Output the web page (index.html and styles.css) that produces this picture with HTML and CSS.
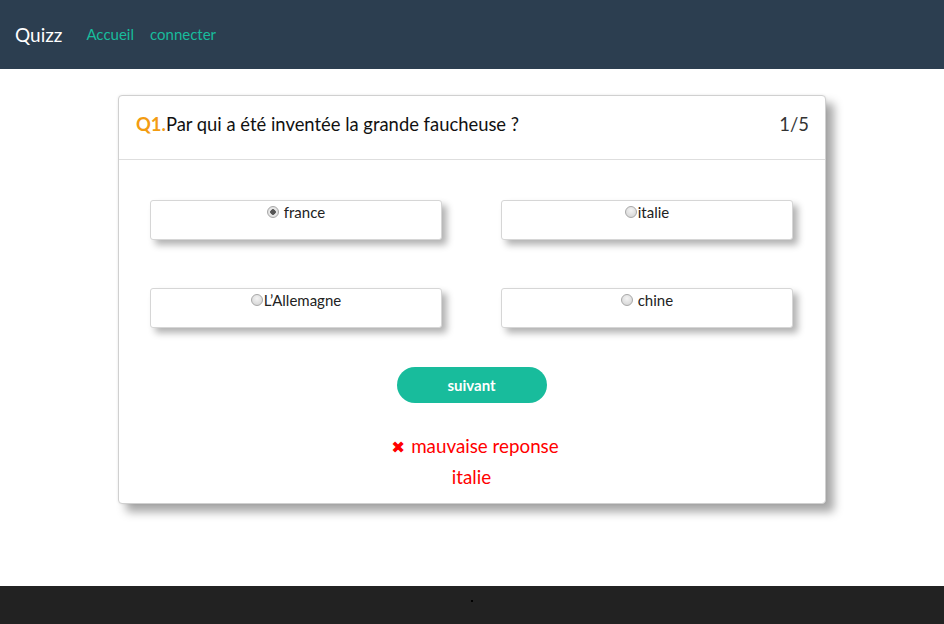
FILE: index.html
```html
<!DOCTYPE html>
<html lang="fr">
<head>
<meta charset="utf-8">
<title>Quizz</title>
<link rel="stylesheet" href="styles.css">
</head>
<body>
<nav class="navbar">
  <a class="brand" href="#">Quizz</a>
  <a class="nav-link" href="#">Accueil</a>
  <a class="nav-link" href="#">connecter</a>
</nav>
<main class="main">
  <section class="card">
    <header class="card-header">
      <h2 class="question"><span class="qnum">Q1.</span>Par qui a été inventée la grande faucheuse ?</h2>
      <span class="progress">1/5</span>
    </header>
    <div class="card-body">
      <div class="options">
        <label class="option"><input type="radio" name="r" class="radio" checked> france</label>
        <label class="option"><input type="radio" name="r" class="radio">italie</label>
        <label class="option"><input type="radio" name="r" class="radio">L’Allemagne</label>
        <label class="option"><input type="radio" name="r" class="radio"> chine</label>
      </div>
      <div class="actions">
        <button class="btn">suivant</button>
      </div>
      <div class="result">
        <p class="result-line result-main"><span class="cross">✖</span>mauvaise reponse</p>
        <p class="result-line">italie</p>
      </div>
    </div>
  </section>
</main>
<footer class="footer"><span class="dot"></span></footer>
</body>
</html>
```
FILE: styles.css
```css
* { box-sizing: border-box; }
html, body { margin: 0; padding: 0; }
body {
  font-family: Lato, "Open Sans", "Liberation Sans", sans-serif;
  font-size: 15px;
  color: #2c3e50;
  background: #fff;
  height: 624px;
  display: flex;
  flex-direction: column;
}
.navbar {
  height: 69px;
  flex: none;
  background: #2c3e50;
  display: flex;
  align-items: center;
  padding: 0 0 0 15px;
}
.brand {
  color: #fff;
  font-size: 19px;
  text-decoration: none;
  margin-right: 24px;
  line-height: 1;
}
.nav-link {
  color: #18bc9c;
  font-size: 15px;
  text-decoration: none;
  margin-right: 16px;
  line-height: 1;
}
.main {
  flex: 1;
  padding-top: 26px;
}
.card {
  width: 708px;
  height: 409px;
  margin: 0 auto;
  border: 1px solid #d0d0d0;
  border-radius: 4px;
  background: #fff;
  box-shadow: 8px 8px 10px rgba(0,0,0,0.35), 0 0 3px rgba(0,0,0,0.08);
}
.card-header {
  height: 64px;
  border-bottom: 1px solid #dedede;
  display: flex;
  align-items: flex-start;
  justify-content: space-between;
  padding: 16px 16px 0 17px;
}
.question {
  margin: 0;
  font-size: 18.4px;
  line-height: 24px;
  font-weight: normal;
  color: #111;
}
.qnum {
  color: #f39c12;
  font-weight: bold;
}
.progress {
  font-size: 18.4px;
  line-height: 24px;
  color: #333;
}
.card-body {
  padding: 40px 32px 0 31px;
}
.options {
  display: grid;
  grid-template-columns: 292px 292px;
  column-gap: 59px;
  row-gap: 48px;
}
.option {
  height: 40px;
  border: 1px solid #d6d6d6;
  border-radius: 3px;
  background: #fff;
  box-shadow: 5px 5px 7px rgba(0,0,0,0.3);
  display: flex;
  justify-content: center;
  align-items: flex-start;
  padding-top: 1px;
  font-size: 15px;
  color: #222;
  white-space: pre;
  line-height: 20px;
}
.radio {
  -webkit-appearance: none;
  appearance: none;
  width: 12px;
  height: 12px;
  margin: 4px 1px 0 0;
  border-radius: 50%;
  border: 1px solid #a8a8a8;
  background: radial-gradient(circle at 50% 35%, #f4f4f4, #d0d0d0);
  flex: none;
}
.radio:checked {
  background: radial-gradient(circle, #555 0 2.5px, #ececec 3px, #d0d0d0 100%);
}
.actions {
  display: flex;
  justify-content: center;
  margin-top: 39px;
}
.btn {
  width: 150px;
  height: 36px;
  border: none;
  border-radius: 18px;
  background: #18bc9c;
  color: #fff;
  font-family: Lato, "Open Sans", "Liberation Sans", sans-serif;
  font-size: 15px;
  font-weight: bold;
}
.result {
  text-align: center;
  color: #f00;
  font-size: 18.8px;
  margin-top: 28px;
}
.result-line {
  margin: 0;
  line-height: 29px;
}
.result-main {
  padding-left: 7px;
}
.cross {
  font-size: 16.5px;
  font-family: "DejaVu Sans", sans-serif;
  font-weight: bold;
  margin-right: 6px;
}
.footer {
  height: 38px;
  flex: none;
  background: #222;
  display: flex;
  justify-content: center;
  padding-top: 14px;
}
.dot {
  width: 2px;
  height: 2px;
  background: #000;
  margin-left: -1px;
}
```
